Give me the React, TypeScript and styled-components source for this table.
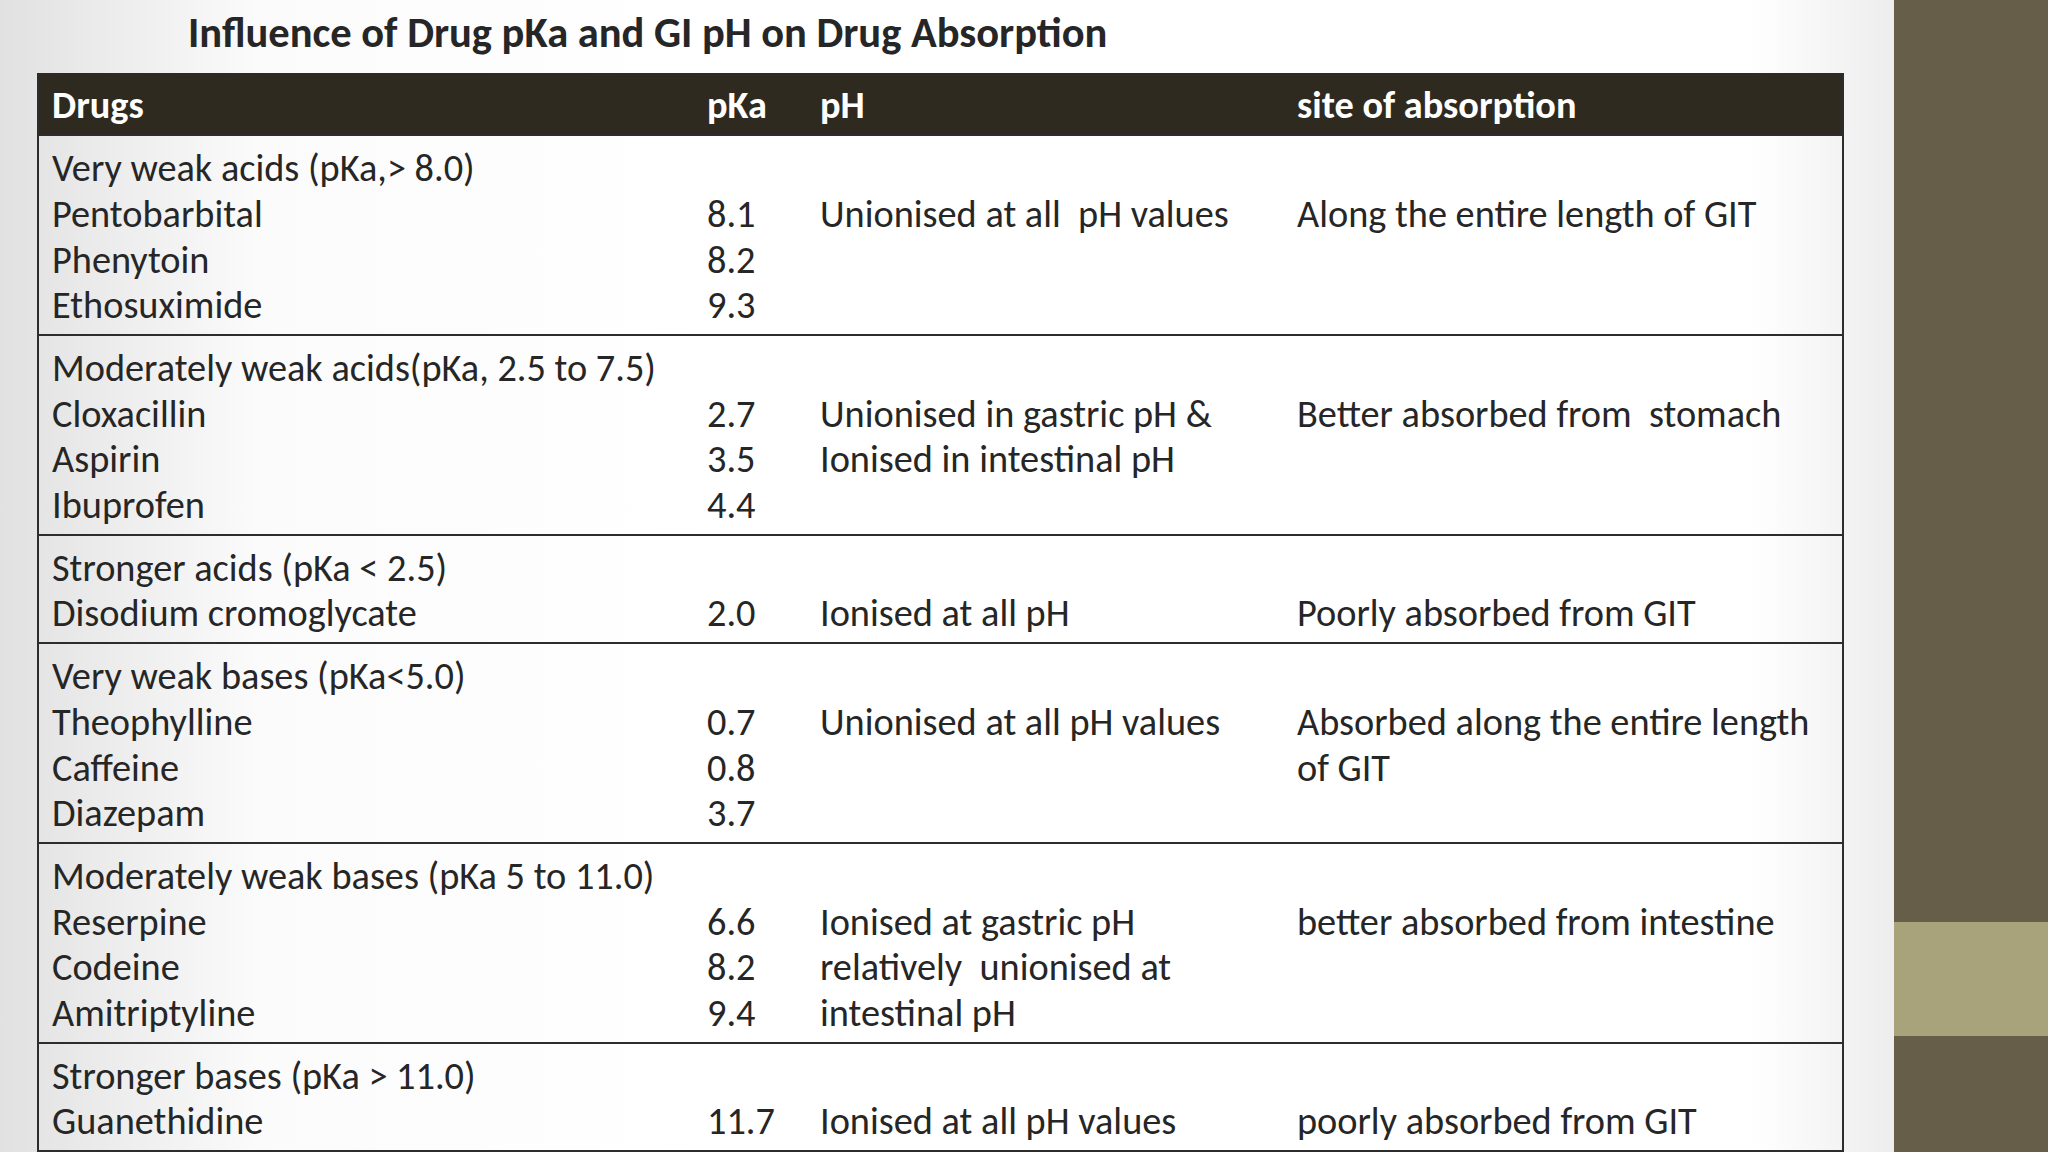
import React from 'react'
import styled, { createGlobalStyle } from 'styled-components'

const GlobalStyle = createGlobalStyle`
  html, body {
    margin: 0;
    padding: 0;
    width: 2048px;
    height: 1152px;
    overflow: hidden;
  }
  body {
    font-family: Carlito, Lato, "Liberation Sans", sans-serif;
    color: #262626;
  }
`

const LINE = 45.7

const Page = styled.div`
  display: flex;
  width: 2048px;
  height: 1152px;
`

const Slide = styled.div`
  flex: 0 0 1894px;
  display: flex;
  flex-direction: column;
  background: linear-gradient(to right, #e1e1e1 0px, #fbfbfb 260px, #ffffff 700px, #ffffff 1750px, #ededed 1894px);
  overflow: hidden;
`

const Title = styled.h1`
  margin: 0;
  height: 74px;
  box-sizing: border-box;
  padding: 0 0 8px 188px;
  display: flex;
  align-items: center;
  font-size: 42.5px;
  font-weight: 700;
  color: #262626;
  white-space: nowrap;
`

const Table = styled.div`
  margin-left: 37px;
  width: 1807px;
  box-sizing: border-box;
  border-left: 2px solid #2d2d2d;
  border-right: 2px solid #2d2d2d;
`

const Row = styled.div<{ $head?: boolean }>`
  display: grid;
  grid-template-columns: 655px 113px 477px 1fr;
  padding: ${p => (p.$head ? '2px' : '10px')} 0 ${p => (p.$head ? '0' : '5px')} 13px;
  height: ${p => (p.$head ? '63px' : 'auto')};
  align-items: ${p => (p.$head ? 'center' : 'start')};
  background: ${p => (p.$head ? '#2f2a20' : 'transparent')};
  color: ${p => (p.$head ? '#ffffff' : '#262626')};
  font-weight: ${p => (p.$head ? 700 : 400)};
  border-bottom: 2px solid #2d2d2d;
  box-sizing: border-box;
`

const Cell = styled.div<{ $offset?: boolean }>`
  display: flex;
  flex-direction: column;
  padding-top: ${p => (p.$offset ? `${LINE}px` : '0')};
  font-size: 38.3px;
  white-space: nowrap;
`

const Line = styled.div`
  height: ${LINE}px;
  line-height: ${LINE}px;
`

const HeadText = styled.div`
  font-size: 38.3px;
  white-space: nowrap;
`

const Sidebar = styled.div`
  flex: 1;
  display: flex;
  flex-direction: column;
  background: #675e49;
`

const SideBlock = styled.div<{ $light?: boolean; $h: number }>`
  flex: 0 0 ${p => p.$h}px;
  background: ${p => (p.$light ? '#a9a37b' : '#675e49')};
`

type Group = {
  heading: string
  drugs: string[]
  pka: string[]
  ph: string[]
  site: string[]
}

const groups: Group[] = [
  {
    heading: 'Very weak acids (pKa,> 8.0)',
    drugs: ['Pentobarbital', 'Phenytoin', 'Ethosuximide'],
    pka: ['8.1', '8.2', '9.3'],
    ph: ['Unionised at all\u00a0 pH values'],
    site: ['Along the entire length of GIT'],
  },
  {
    heading: 'Moderately weak acids(pKa, 2.5 to 7.5)',
    drugs: ['Cloxacillin', 'Aspirin', 'Ibuprofen'],
    pka: ['2.7', '3.5', '4.4'],
    ph: ['Unionised in gastric pH &', 'Ionised in intestinal pH'],
    site: ['Better absorbed from\u00a0 stomach'],
  },
  {
    heading: 'Stronger acids (pKa < 2.5)',
    drugs: ['Disodium cromoglycate'],
    pka: ['2.0'],
    ph: ['Ionised at all pH'],
    site: ['Poorly absorbed from GIT'],
  },
  {
    heading: 'Very weak bases (pKa<5.0)',
    drugs: ['Theophylline', 'Caffeine', 'Diazepam'],
    pka: ['0.7', '0.8', '3.7'],
    ph: ['Unionised at all pH values'],
    site: ['Absorbed along the entire length', 'of GIT'],
  },
  {
    heading: 'Moderately weak bases (pKa 5 to 11.0)',
    drugs: ['Reserpine', 'Codeine', 'Amitriptyline'],
    pka: ['6.6', '8.2', '9.4'],
    ph: ['Ionised at gastric pH', 'relatively\u00a0 unionised at', 'intestinal pH'],
    site: ['better absorbed from intestine'],
  },
  {
    heading: 'Stronger bases (pKa > 11.0)',
    drugs: ['Guanethidine'],
    pka: ['11.7'],
    ph: ['Ionised at all pH values'],
    site: ['poorly absorbed from GIT'],
  },
]

const Lines = ({ items }: { items: string[] }) => (
  <>
    {items.map((t, i) => (
      <Line key={i}>{t}</Line>
    ))}
  </>
)

export default function App() {
  return (
    <>
      <GlobalStyle />
      <Page>
        <Slide>
          <Title>Influence of Drug pKa and GI pH on Drug Absorption</Title>
          <Table>
            <Row $head>
              <HeadText>Drugs</HeadText>
              <HeadText>pKa</HeadText>
              <HeadText>pH</HeadText>
              <HeadText>site of absorption</HeadText>
            </Row>
            {groups.map(g => (
              <Row key={g.heading}>
                <Cell>
                  <Lines items={[g.heading, ...g.drugs]} />
                </Cell>
                <Cell $offset>
                  <Lines items={g.pka} />
                </Cell>
                <Cell $offset>
                  <Lines items={g.ph} />
                </Cell>
                <Cell $offset>
                  <Lines items={g.site} />
                </Cell>
              </Row>
            ))}
          </Table>
        </Slide>
        <Sidebar>
          <SideBlock $h={922} />
          <SideBlock $light $h={114} />
        </Sidebar>
      </Page>
    </>
  )
}
